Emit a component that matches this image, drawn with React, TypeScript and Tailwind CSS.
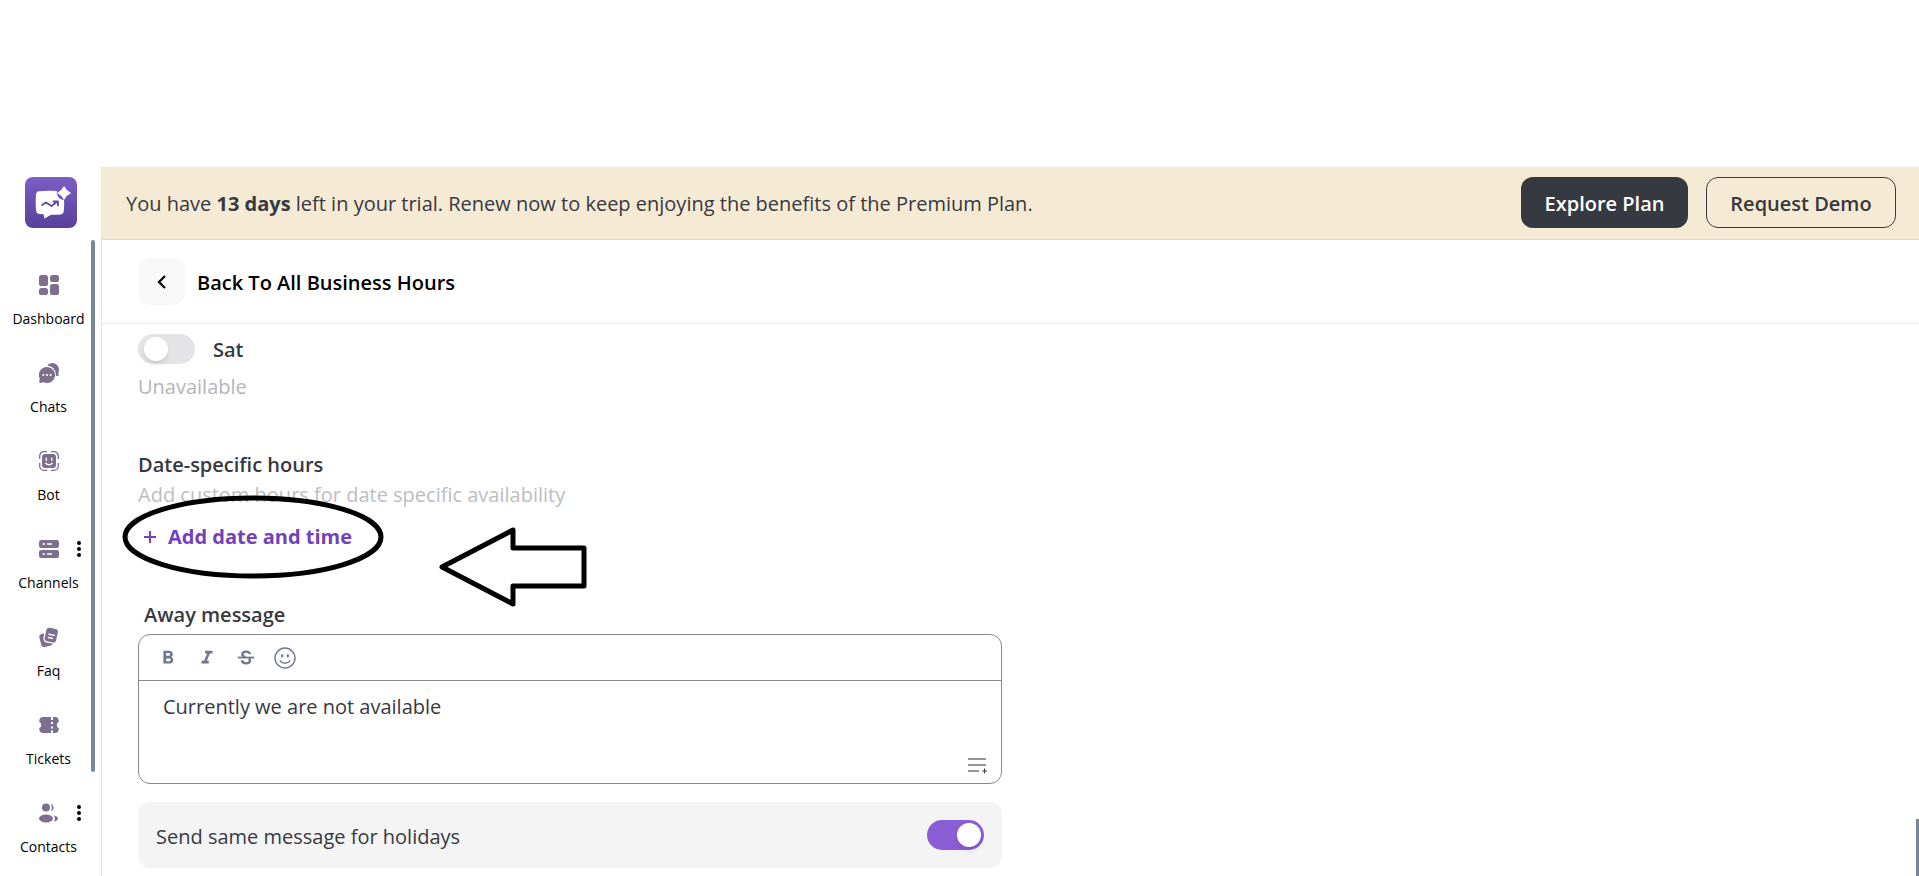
import React, { useState } from 'react';

interface NavItem {
  label: string;
  icon: React.ReactNode;
  hasMenu?: boolean;
}

const DashboardIcon = () => (
  <svg width="20" height="20" viewBox="0 0 20 20" fill="currentColor" aria-hidden="true">
    <rect x="0" y="0" width="9" height="11" rx="2.6" />
    <rect x="11" y="0" width="9" height="7" rx="2.6" />
    <rect x="0" y="13" width="9" height="7" rx="2.6" />
    <rect x="11" y="9" width="9" height="11" rx="2.6" />
  </svg>
);

const ChatsIcon = () => (
  <svg width="20" height="20" viewBox="0 0 20 20" aria-hidden="true">
    <path
      fill="currentColor"
      d="M8.2 2.6C9.4 .9 11.2 0 13.3 0C17 0 20 3 20 6.7c0 1.300-.3 2.300-.8 3.300l.5 2.300c.1 .6-.2 .9-.8 .8l-1.900-.3C17.100 7.200 13.600 3.200 8.200 2.600Z"
    />
    <path
      fill="currentColor"
      d="M8 4A8 8 0 1 1 4.800 19.300l-3.600 .6c-.7 .1-1.100-.3-1-1l.5-3.300A8 8 0 0 1 8 4Z"
    />
    <circle cx="4.400" cy="12" r="1.100" fill="white" />
    <circle cx="8" cy="12" r="1.100" fill="white" />
    <circle cx="11.600" cy="12" r="1.100" fill="white" />
  </svg>
);

const BotIcon = () => (
  <svg width="20" height="20" viewBox="0 0 20 20" fill="none" aria-hidden="true">
    <path
      d="M.7 8V5A4.300 4.300 0 0 1 5 .7h3M12 .7h3A4.300 4.300 0 0 1 19.300 5v3M19.300 12v3a4.300 4.300 0 0 1-4.300 4.300h-3M8 19.300H5A4.300 4.300 0 0 1 .7 15v-3"
      stroke="currentColor"
      strokeWidth="1.300"
    />
    <rect x="3" y="3" width="14" height="14" rx="3" fill="currentColor" />
    <path d="M7.300 7.200v2M12.700 7.200v2" stroke="white" strokeWidth="1.400" strokeLinecap="round" />
    <path d="M6.800 12.200c1.600 2 4.800 2 6.400 0" stroke="white" strokeWidth="1.400" strokeLinecap="round" />
  </svg>
);

const ChannelsIcon = () => (
  <svg width="20" height="20" viewBox="0 0 20 20" aria-hidden="true">
    <rect x="0" y="1" width="20" height="8" rx="2.200" fill="currentColor" />
    <rect x="0" y="11" width="20" height="8" rx="2.200" fill="currentColor" />
    <path d="M4 5h1.500M8.500 5h4M4 15h1.500M8.500 15h4" stroke="white" strokeWidth="1.300" strokeLinecap="round" />
  </svg>
);

const FaqIcon = () => (
  <svg width="20" height="20" viewBox="0 0 20 20" aria-hidden="true">
    <rect x="1.200" y="6" width="12" height="13.500" rx="3" transform="rotate(-14 7 13)" fill="currentColor" />
    <rect x="5.800" y=".6" width="13" height="15" rx="3.400" transform="rotate(12 12.300 8)" fill="currentColor" stroke="white" strokeWidth="1.300" />
    <path d="M10 7.200l5.400 1.200M9.300 10.500l4.200 .9" stroke="white" strokeWidth="1.400" strokeLinecap="round" />
  </svg>
);

const TicketsIcon = () => (
  <svg width="20" height="20" viewBox="0 0 20 20" fill="currentColor" aria-hidden="true">
    <path d="M12 2H4C1.500 2 .3 3.500 .2 6.200c0 .6 .3 .8 .7 1 1.700 .7 1.700 4.900 0 5.600-.4 .2-.7 .4-.7 1C.3 16.500 1.500 18 4 18h8v-2.500h2V18h2c2.500 0 3.800-1.500 3.900-4.200 0-.6-.3-.8-.7-1-1.700-.7-1.700-4.900 0-5.600 .4-.2 .7-.4 .7-1C19.800 3.500 18.500 2 16 2h-2v3h-2Z" />
    <path fill="white" d="M12 7h2v2h-2ZM12 11.500h2v2h-2Z" />
  </svg>
);

const ContactsIcon = () => (
  <svg width="20" height="20" viewBox="0 0 20 20" fill="currentColor" aria-hidden="true">
    <circle cx="7" cy="4.500" r="4" />
    <ellipse cx="7" cy="15.500" rx="7" ry="4" />
    <path d="M11.800 1a3.600 3.600 0 0 1 0 7c1.400-2.200 1.400-4.800 0-7Z" />
    <path d="M14.800 12.400c2.300 .3 4.100 1.600 4.100 3.100s-1.600 2.800-4 3.100c1.400-1.900 1.400-4.300-.1-6.200Z" />
  </svg>
);

const navItems: NavItem[] = [
  { label: 'Dashboard', icon: <DashboardIcon /> },
  { label: 'Chats', icon: <ChatsIcon /> },
  { label: 'Bot', icon: <BotIcon /> },
  { label: 'Channels', icon: <ChannelsIcon />, hasMenu: true },
  { label: 'Faq', icon: <FaqIcon /> },
  { label: 'Tickets', icon: <TicketsIcon /> },
  { label: 'Contacts', icon: <ContactsIcon />, hasMenu: true },
];

const Logo = () => (
  <svg width="52" height="51" viewBox="0 0 52 51" aria-hidden="true">
    <defs>
      <linearGradient id="logo-bg" x1="0" y1="0" x2="0" y2="1">
        <stop offset="0" stopColor="#7a5fc6" />
        <stop offset="1" stopColor="#58409a" />
      </linearGradient>
    </defs>
    <rect width="52" height="51" rx="8" fill="url(#logo-bg)" />
    <path
      fill="white"
      d="M14 14.300C20 13.500 26 13.500 32 14C31 18 34 22.500 39 23C39.300 27 39.200 31 38.700 34.500C38.400 36.300 37.400 37.200 35.600 37.400C32.300 37.700 29 37.800 26 37.800L19.500 41.500L18.600 37.300L14.200 36.900C12.400 36.700 11.400 35.700 11.200 34C10.500 28.500 10.500 23 11.100 17.200C11.300 15.500 12.300 14.500 14 14.300Z"
    />
    <path
      fill="white"
      stroke="white"
      strokeWidth="1.200"
      strokeLinejoin="round"
      d="M39 10C40.400 13 42 14.600 45.200 16C42 17.400 40.400 19 39 22C37.600 19 36 17.400 32.800 16C36 14.600 37.600 13 39 10Z"
    />
    <path
      d="M17 28l4-2.500 5.500 3.500 6-4.500M28.500 24.500h4.500v4"
      stroke="#65499f"
      strokeWidth="1.800"
      fill="none"
      strokeLinecap="round"
      strokeLinejoin="round"
    />
  </svg>
);

const MoreIcon = () => (
  <svg width="4" height="16" viewBox="0 0 4 16" fill="currentColor" aria-hidden="true">
    <circle cx="2" cy="2" r="2" />
    <circle cx="2" cy="8" r="2" />
    <circle cx="2" cy="14" r="2" />
  </svg>
);

interface ToggleProps {
  id: string;
  checked: boolean;
  onChange: (checked: boolean) => void;
}

const Toggle: React.FC<ToggleProps> = ({ id, checked, onChange }) => (
  <input
    id={id}
    type="checkbox"
    role="switch"
    checked={checked}
    onChange={(e) => onChange(e.target.checked)}
    className={`h-[30px] w-[57px] shrink-0 cursor-pointer appearance-none rounded-full before:mt-[3px] before:block before:size-6 before:rounded-full before:bg-white before:shadow-md before:content-[''] ${
      checked ? 'bg-[#8c5ed5] before:ml-[30px]' : 'bg-[#e4e4e7] before:ml-[6px]'
    }`}
  />
);

const Sidebar = () => (
  <aside className="flex w-[102px] shrink-0 flex-col border-r border-[#e5e5e8]">
    <a href="#home" aria-label="Home" className="mt-[10px] ml-[25px] w-[52px]">
      <Logo />
    </a>
    <div className="mt-3 flex">
      <nav className="w-[91px] shrink-0 pt-6">
        <ul>
          {navItems.map((item) => (
            <li key={item.label} className="relative h-[88px] pt-[11px] last:h-[76px]">
              <a href={`#${item.label.toLowerCase()}`} className="flex w-[97px] flex-col items-center text-black">
                <span className="text-[#7d708f]">{item.icon}</span>
                <span className="mt-[14px] text-[14px] leading-5 font-medium">{item.label}</span>
              </a>
              {item.hasMenu && (
                <button type="button" aria-label={`${item.label} menu`} className="absolute top-[13px] left-[77px] text-black">
                  <MoreIcon />
                </button>
              )}
            </li>
          ))}
        </ul>
      </nav>
      <div className="h-[532px] w-1 rounded-full bg-[#778899]" />
    </div>
  </aside>
);

const TrialBanner = () => (
  <div className="flex items-center justify-between border-b border-[#e3d8c1] bg-[#f5ead3] pt-[10px] pr-[23px] pb-[11px] pl-6 text-[20px] text-[#373941]">
    <p className="pt-[2px]">
      You have <strong className="font-bold">13 days</strong> left in your trial. Renew now to keep enjoying the benefits of the Premium Plan.
    </p>
    <div className="flex gap-[18px] font-semibold">
      <button type="button" className="h-[51px] w-[167px] rounded-xl bg-[#373941] pt-[2px] text-white">
        Explore Plan
      </button>
      <button type="button" className="h-[51px] w-[190px] rounded-xl border border-[#373941] pt-[2px]">
        Request Demo
      </button>
    </div>
  </div>
);

const AwayMessageEditor = () => {
  const [message, setMessage] = useState('Currently we are not available');

  return (
    <div className="relative rounded-xl border border-[#88888c]">
      <div className="flex h-[46px] items-center border-b border-[#88888c] pl-[18px] text-[#70778a]">
        <button type="button" aria-label="Bold" className="flex w-[39px]">
          <svg width="22" height="22" viewBox="0 0 24 24" fill="currentColor">
            <path d="M15.600 10.790c.97-.67 1.650-1.770 1.650-2.790 0-2.260-1.750-4-4-4H7v14h7.040c2.090 0 3.710-1.700 3.710-3.790 0-1.520-.86-2.820-2.150-3.420zM10 6.500h3c.83 0 1.500.67 1.500 1.500s-.67 1.500-1.500 1.500h-3v-3zm3.500 9H10v-3h3.500c.83 0 1.500.67 1.500 1.500s-.67 1.500-1.500 1.500z" />
          </svg>
        </button>
        <button type="button" aria-label="Italic" className="flex w-[39px]">
          <svg width="22" height="22" viewBox="0 0 24 24" fill="currentColor">
            <path d="M10 4v3h2.210l-3.420 8H6v3h8v-3h-2.210l3.420-8H18V4z" />
          </svg>
        </button>
        <button type="button" aria-label="Strikethrough" className="flex w-[39px]">
          <svg width="22" height="22" viewBox="0 0 24 24" fill="none" stroke="currentColor">
            <path d="M3 11.500h18" strokeWidth="2" />
            <path d="M16.300 7.800C16 6 14.500 5 12.100 5S8 6.100 8 8c0 1.600 1.300 2.600 3.500 3.300M7.500 14.500C7.900 16.800 9.600 17.800 12.100 17.800c2.600 0 4.300-1 4.300-3 0-1.200-.5-2-1.300-2.600" strokeWidth="2.600" />
          </svg>
        </button>
        <button type="button" aria-label="Emoji" className="flex">
          <svg width="22" height="22" viewBox="0 0 22 22" fill="none" stroke="currentColor">
            <circle cx="11" cy="11" r="10" strokeWidth="1.400" />
            <path d="M6.200 13.800c2.300 3.200 7.300 3.200 9.600 0" strokeWidth="1.400" strokeLinecap="round" />
            <ellipse cx="8.200" cy="8.700" rx="1" ry="1.500" fill="currentColor" strokeWidth=".4" />
            <ellipse cx="13.800" cy="8.700" rx="1" ry="1.500" fill="currentColor" strokeWidth=".4" />
          </svg>
        </button>
      </div>
      <textarea
        id="away-message"
        value={message}
        onChange={(e) => setMessage(e.target.value)}
        className="block h-[102px] w-full resize-none bg-transparent px-6 pt-3 text-[20px] leading-7 text-[#373941] outline-none"
      />
      <button type="button" aria-label="Insert variable" className="absolute right-[13px] bottom-2">
        <svg width="20" height="18" viewBox="0 0 20 18" fill="none">
          <path d="M0 2h18M0 8h18M0 14h11" stroke="#94949c" strokeWidth="2" />
          <path d="M14 14h5M16.500 11.500v5" stroke="#373941" strokeWidth="1" />
        </svg>
      </button>
    </div>
  );
};

// Hand-drawn callout over the "Add date and time" action
const Callout = () => (
  <svg
    width="466"
    height="116"
    viewBox="0 0 466 116"
    fill="none"
    stroke="black"
    className="pointer-events-none absolute -top-7 -left-4"
    aria-hidden="true"
  >
    <ellipse cx="131" cy="42" rx="128" ry="39" strokeWidth="5" />
    <path d="M320 72L391 35v18h71v38h-71v18Z" strokeWidth="5" strokeLinejoin="round" />
  </svg>
);

const BusinessHours = () => {
  const [saturday, setSaturday] = useState(false);
  const [holidays, setHolidays] = useState(true);

  return (
    <section className="w-full max-w-[900px] pt-[9px] pl-9 text-[20px] leading-7 text-[#373941]">
      <div className="flex items-center gap-[18px]">
        <Toggle id="saturday" checked={saturday} onChange={setSaturday} />
        <label htmlFor="saturday" className="pt-[3px] font-semibold">
          Sat
        </label>
      </div>
      <p className="mt-[9px] text-[#b5b5b8]">Unavailable</p>

      <h2 className="mt-[50px] font-semibold">Date-specific hours</h2>
      <p className="mt-[2px] text-[#bdbdc0]">Add custom hours for date specific availability</p>
      <div className="relative mt-[14px]">
        <button type="button" className="flex items-center pl-[6px] font-bold text-[#7042bd]">
          <svg width="12" height="12" viewBox="0 0 12 12" stroke="currentColor" strokeWidth="2" aria-hidden="true">
            <path d="M6 0v12M0 6h12" />
          </svg>
          <span className="ml-3">Add date and time</span>
        </button>
        <Callout />
      </div>

      <label htmlFor="away-message" className="mt-[50px] mb-[5px] block pl-[6px] font-semibold">
        Away message
      </label>
      <AwayMessageEditor />

      <div className="mt-[18px] flex h-[66px] items-center justify-between rounded-xl bg-[#f4f4f5] px-[18px]">
        <label htmlFor="holidays" className="pt-[3px]">
          Send same message for holidays
        </label>
        <Toggle id="holidays" checked={holidays} onChange={setHolidays} />
      </div>
    </section>
  );
};

export default function App() {
  return (
    <div className="flex min-h-screen bg-white pt-[167px] font-['Open_Sans','Noto_Sans',sans-serif]">
      <Sidebar />
      <main className="flex min-w-0 flex-1 flex-col">
        <TrialBanner />
        <header className="flex h-[84px] items-center gap-3 border-b border-[#e9e9eb] pl-9">
          <button type="button" aria-label="Back" className="flex size-[47px] items-center justify-center rounded-xl bg-[#f8f8f8] text-black">
            <svg width="9" height="14" viewBox="0 0 9 14" fill="none" stroke="currentColor" strokeWidth="2.200" aria-hidden="true">
              <path d="M8 1L2 7l6 6" />
            </svg>
          </button>
          <h1 className="pt-[2px] text-[20px] font-semibold text-black">Back To All Business Hours</h1>
        </header>
        <div className="flex flex-1 justify-between">
          <BusinessHours />
          <div className="h-[57px] w-[3px] shrink-0 self-end bg-[#778899]" />
        </div>
      </main>
    </div>
  );
}
